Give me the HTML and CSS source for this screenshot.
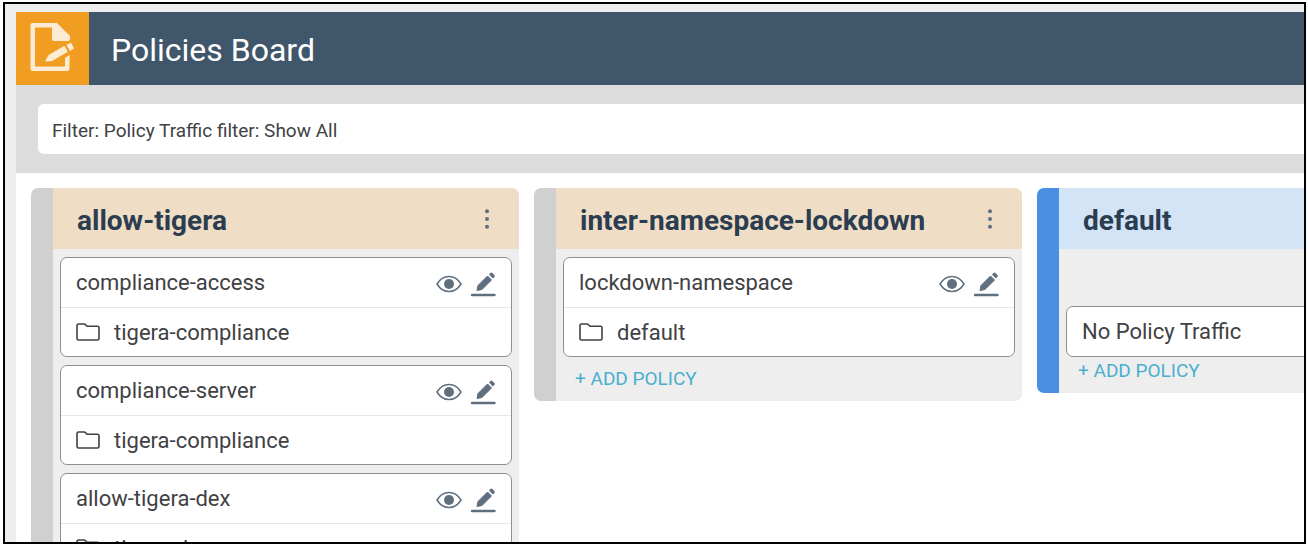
FILE: index.html
```html
<!DOCTYPE html>
<html lang="en">
<head>
    <meta charset="UTF-8">
    <meta name="viewport" content="width=device-width, initial-scale=1.0">
    <title>Policies Board</title>
    <link rel="stylesheet" href="styles.css">
</head>
<body>

    <!-- Shared icons -->
    <svg class="icon-defs" aria-hidden="true">
        <symbol id="icon-eye" viewBox="0 0 26 18">
            <path d="M1 9C4 4 8 1.5 13 1.5S22 4 25 9C22 14 18 16.5 13 16.5S4 14 1 9Z" fill="none" stroke="currentColor" stroke-width="1.5"></path>
            <circle cx="13" cy="9" r="5" fill="currentColor"></circle>
        </symbol>
        <symbol id="icon-edit" viewBox="0 0 26 26">
            <path d="M7 19.5L8 14.5L17.5 5L21.5 9L12 18.5Z" fill="currentColor" stroke="currentColor" stroke-linejoin="round"></path>
            <path d="M19 3.6L20.8 1.8Q21.6 1.2 22.4 2L24.6 4.2Q25.2 5 24.6 5.8L22.8 7.5Z" fill="currentColor"></path>
            <path d="M2 24H24.5" stroke="currentColor" stroke-width="2.4" stroke-linecap="round"></path>
        </symbol>
        <symbol id="icon-folder" viewBox="0 0 24 18">
            <path d="M1 15.5V2.5Q1 1 2.5 1H8Q9 1 9.6 1.8L11 3.2H21.5Q23 3.2 23 4.7V15.5Q23 17 21.5 17H2.5Q1 17 1 15.5Z" fill="none" stroke="currentColor" stroke-width="1.6"></path>
        </symbol>
        <symbol id="icon-more" viewBox="0 0 6 20">
            <circle cx="3" cy="2.2" r="2" fill="currentColor"></circle>
            <circle cx="3" cy="10" r="2" fill="currentColor"></circle>
            <circle cx="3" cy="17.8" r="2" fill="currentColor"></circle>
        </symbol>
    </svg>

    <main class="page">
        <!-- Header -->
        <header class="header">
            <div class="header-icon">
                <svg width="73" height="73" viewBox="0 0 73 73" aria-hidden="true">
                    <path d="M16.500 11H41L54 24V27Q54 29 52 29H38Q36 29 36 27V15.500H19V54.500H49V46L53.500 43V57Q53.500 59 51.500 59H16.500Q14.500 59 14.500 57V13Q14.500 11 16.500 11Z" fill="#fdebd3"></path>
                    <path d="M30.500 48.500L33.500 43.500L48 35L50.500 39.500L36 48Z" fill="#fdebd3" stroke="#fdebd3" stroke-width="2" stroke-linejoin="round"></path>
                    <path d="M50.500 33L55 30.500L58 36.500L54 39Z" fill="#fdebd3"></path>
                </svg>
            </div>
            <h1 class="title">Policies Board</h1>
        </header>

        <!-- Filter -->
        <div class="toolbar">
            <button type="button" class="filter">Filter: Policy Traffic filter: Show All</button>
        </div>

        <!-- Tiers -->
        <div class="board">
            <section class="tier">
                <div class="tier-header">
                    <h2 class="tier-name">allow-tigera</h2>
                    <button type="button" class="icon-button" aria-label="Tier menu"><svg width="6" height="20"><use href="#icon-more"></use></svg></button>
                </div>
                <div class="tier-body">
                    <article class="policy">
                        <div class="policy-row">
                            <span class="policy-name">compliance-access</span>
                            <button type="button" class="icon-button" aria-label="View"><svg width="26" height="18"><use href="#icon-eye"></use></svg></button>
                            <button type="button" class="icon-button" aria-label="Edit"><svg width="26" height="26"><use href="#icon-edit"></use></svg></button>
                        </div>
                        <div class="policy-row namespace">
                            <svg width="24" height="18"><use href="#icon-folder"></use></svg>
                            <span>tigera-compliance</span>
                        </div>
                    </article>
                    <article class="policy">
                        <div class="policy-row">
                            <span class="policy-name">compliance-server</span>
                            <button type="button" class="icon-button" aria-label="View"><svg width="26" height="18"><use href="#icon-eye"></use></svg></button>
                            <button type="button" class="icon-button" aria-label="Edit"><svg width="26" height="26"><use href="#icon-edit"></use></svg></button>
                        </div>
                        <div class="policy-row namespace">
                            <svg width="24" height="18"><use href="#icon-folder"></use></svg>
                            <span>tigera-compliance</span>
                        </div>
                    </article>
                    <article class="policy">
                        <div class="policy-row">
                            <span class="policy-name">allow-tigera-dex</span>
                            <button type="button" class="icon-button" aria-label="View"><svg width="26" height="18"><use href="#icon-eye"></use></svg></button>
                            <button type="button" class="icon-button" aria-label="Edit"><svg width="26" height="26"><use href="#icon-edit"></use></svg></button>
                        </div>
                        <div class="policy-row namespace">
                            <svg width="24" height="18"><use href="#icon-folder"></use></svg>
                            <span>tigera-dex</span>
                        </div>
                    </article>
                </div>
            </section>

            <section class="tier">
                <div class="tier-header">
                    <h2 class="tier-name">inter-namespace-lockdown</h2>
                    <button type="button" class="icon-button" aria-label="Tier menu"><svg width="6" height="20"><use href="#icon-more"></use></svg></button>
                </div>
                <div class="tier-body">
                    <article class="policy">
                        <div class="policy-row">
                            <span class="policy-name">lockdown-namespace</span>
                            <button type="button" class="icon-button" aria-label="View"><svg width="26" height="18"><use href="#icon-eye"></use></svg></button>
                            <button type="button" class="icon-button" aria-label="Edit"><svg width="26" height="26"><use href="#icon-edit"></use></svg></button>
                        </div>
                        <div class="policy-row namespace">
                            <svg width="24" height="18"><use href="#icon-folder"></use></svg>
                            <span>default</span>
                        </div>
                    </article>
                    <a href="#" class="add-policy">+ ADD POLICY</a>
                </div>
            </section>

            <section class="tier tier-default">
                <div class="tier-header">
                    <h2 class="tier-name">default</h2>
                </div>
                <div class="tier-body">
                    <div class="policy empty">
                        <div class="policy-row">No Policy Traffic</div>
                    </div>
                    <a href="#" class="add-policy">+ ADD POLICY</a>
                </div>
            </section>
        </div>
    </main>

</body>
</html>
```
FILE: styles.css
```css
/* General Styles */
* {
    box-sizing: border-box;
}

body {
    margin: 0;
    height: 100vh;
    padding: 2px 2px 1px 3px;
    display: flex;
    overflow: hidden;
    background: #fff;
    font-family: Roboto, sans-serif;
    font-size: 22px;
    color: #404144;
}

h1, h2 {
    margin: 0;
}

button {
    border: 0;
    font-family: inherit;
    color: inherit;
    cursor: pointer;
}

svg {
    display: block;
    flex: none;
}

.icon-defs {
    display: none;
}

.page {
    flex: 1;
    min-width: 0;
    display: flex;
    flex-direction: column;
    padding: 8px 0 0 11px;
    border: 2px solid #000;
    background: #eee;
    overflow: hidden;
}

/* Header */
.header {
    flex: none;
    display: flex;
    align-items: center;
    gap: 22px;
    background: #40566a;
}

.header-icon {
    background: #f19d21;
}

.title {
    padding-top: 2px;
    font-size: 32px;
    font-weight: 400;
    color: #fff;
}

/* Filter */
.toolbar {
    flex: none;
    display: flex;
    padding: 19px 0;
    padding-left: 22px;
    background: #dcdcdc;
}

.filter {
    flex: 1;
    height: 50px;
    padding: 2px 14px 0;
    border-radius: 6px 0 0 6px;
    background: #fff;
    font-size: 19px;
    text-align: left;
}

/* Board */
.board {
    flex: 1;
    min-height: 0;
    display: flex;
    align-items: flex-start;
    gap: 15px;
    padding: 15px 0 0 15px;
    background: #fff;
}

.tier {
    flex: none;
    width: 488px;
    border-left: 22px solid #d0d0d0;
    border-radius: 7px;
    background: #eee;
    overflow: hidden;
}

.tier-header {
    height: 61px;
    display: flex;
    align-items: center;
    justify-content: space-between;
    padding: 0 29px 0 24px;
    background: #f0ddc5;
}

.tier-name {
    padding-top: 3px;
    font-size: 28px;
    font-weight: 700;
    color: #2b3d50;
}

.tier-default {
    border-left-color: #4a90e2;
}

.tier-default .tier-header {
    background: #d3e4f6;
}

.tier-body {
    padding: 8px 7px;
}

/* Policies */
.policy {
    margin-bottom: 8px;
    border: 1px solid #8f8f8f;
    border-radius: 7px;
    background: #fff;
}

.policy-row {
    height: 49px;
    display: flex;
    align-items: center;
    gap: 8px;
    padding: 0 15px;
}

.policy-name {
    flex: 1;
}

.policy-row .icon-button {
    padding-top: 2px;
}

.namespace {
    gap: 14px;
    border-top: 1px solid #e6e6e6;
}

.empty {
    margin: 49px 0 0;
}

.icon-button {
    padding: 0;
    background: none;
    color: #5f6f7e;
}

.add-policy {
    display: block;
    padding-left: 12px;
    line-height: 28px;
    font-size: 19px;
    color: #4aafcf;
    text-decoration: none;
}
```
